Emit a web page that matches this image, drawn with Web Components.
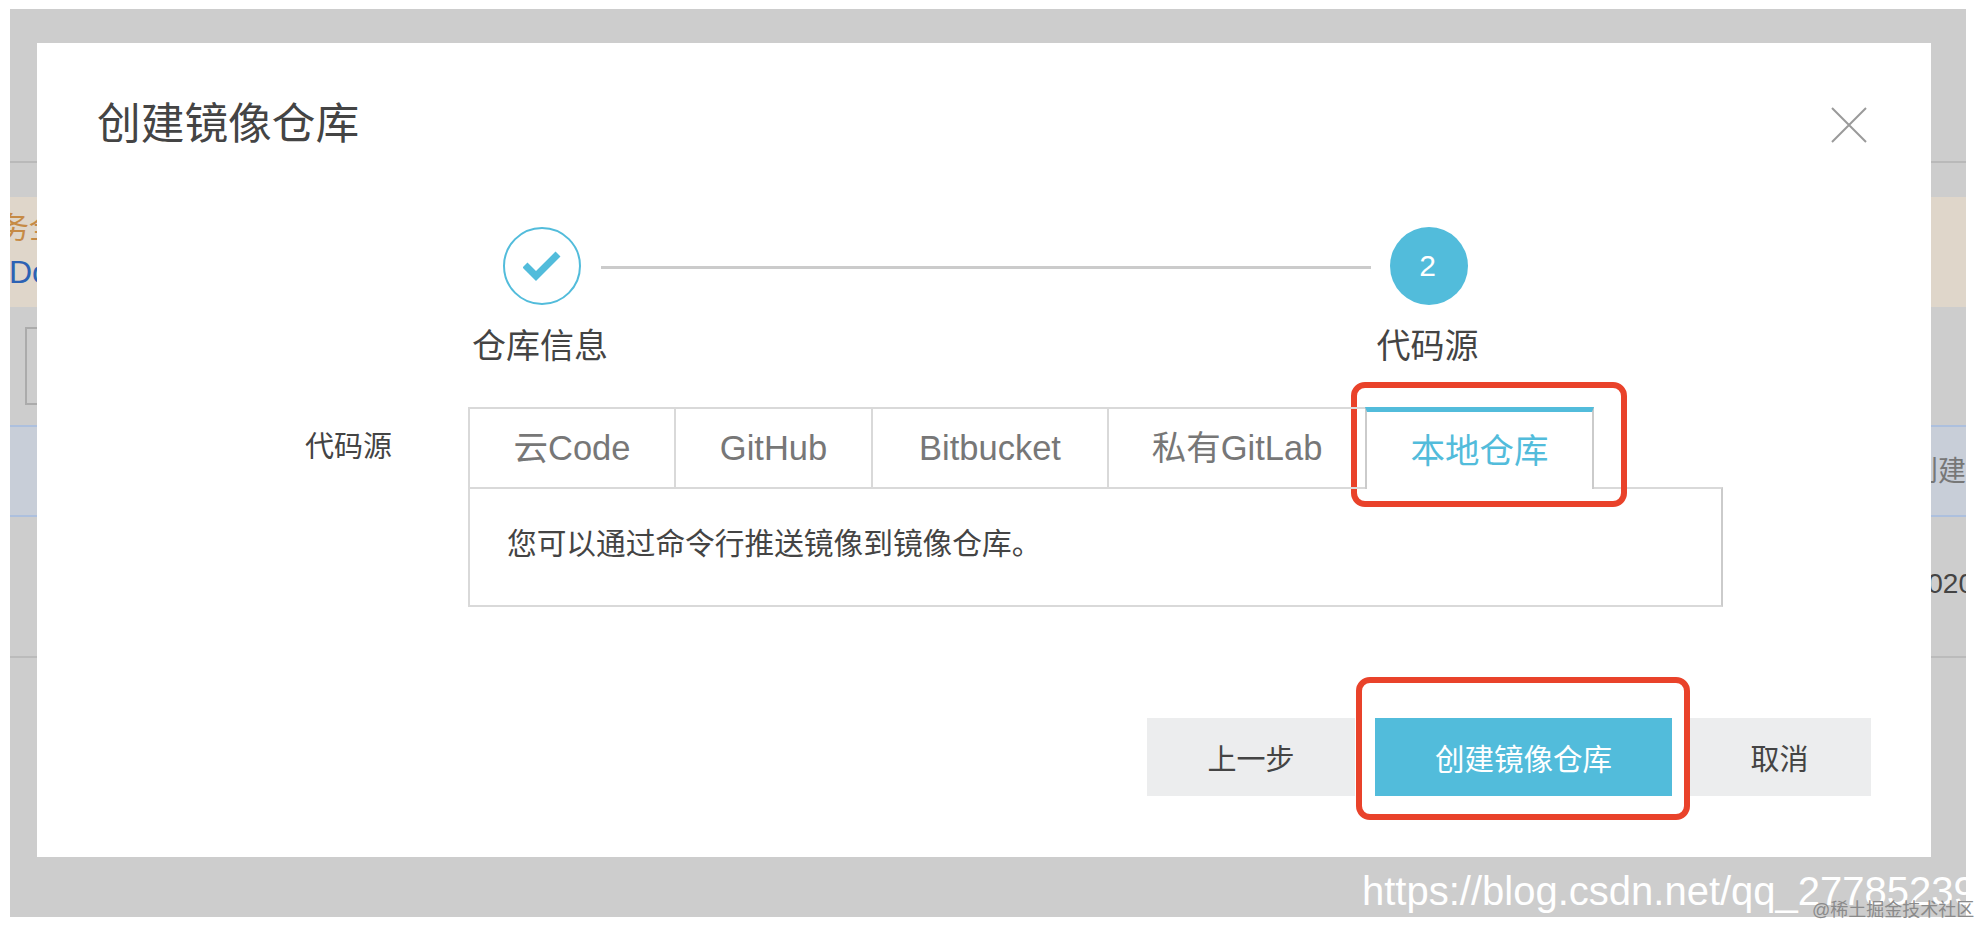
<!DOCTYPE html>
<html lang="zh">
<head>
<meta charset="utf-8">
<title>创建镜像仓库</title>
<style>
  html, body { margin: 0; height: 926px; overflow: hidden; background: #fff; }
  body { font-family: "Liberation Sans", "Noto Sans CJK SC", sans-serif; color: #444; }
</style>
</head>
<body>
<repo-screen>
  <repo-dialog title-text="创建镜像仓库">
    <repo-steps slot="steps">
      <repo-step state="done" label="仓库信息"></repo-step>
      <repo-step num="2" label="代码源"></repo-step>
    </repo-steps>
    <repo-tabs slot="form" label="代码源">
      <repo-tab style="width:206px">云Code</repo-tab>
      <repo-tab style="width:197px">GitHub</repo-tab>
      <repo-tab style="width:236px">Bitbucket</repo-tab>
      <repo-tab style="width:258px">私有GitLab</repo-tab>
      <repo-tab style="width:229px" active>本地仓库</repo-tab>
      <span slot="panel">您可以通过命令行推送镜像到镜像仓库。</span>
    </repo-tabs>
    <repo-button slot="actions" style="width:208px">上一步</repo-button>
    <repo-button slot="actions" style="width:297px" primary>创建镜像仓库</repo-button>
    <repo-button slot="actions" style="width:183px">取消</repo-button>
  </repo-dialog>
</repo-screen>

<script>
// page behind the modal, only its edges show
const screenTemplate = document.createElement("template");
screenTemplate.innerHTML = `
  <style>
    :host { display: block; position: relative; height: 926px; padding: 9px 12px 9px 10px; box-sizing: border-box; }
    .frame { position: relative; height: 908px; background: #cdcdcd; overflow: hidden; }
    .head { height: 154px; border-bottom: 2px solid #b9b9b9; box-sizing: border-box; }
    .notice { margin-top: 34px; height: 110px; background: #dfd6ca; padding-top: 9px; box-sizing: border-box; }
    .notice div { font-size: 30px; line-height: 44px; margin-left: -11px; white-space: nowrap; }
    .warn { color: #c68a45; }
    .doc { color: #2c62b4; margin-left: -1px !important; font-size: 32px !important; }
    .tools { margin: 20px 0 0 15px; height: 78px; width: 60px; border: 2px solid #ababab; box-sizing: border-box; }
    .thead { margin-top: 20px; height: 92px; background: #c8ced8; border-top: 2px solid #adc0de; border-bottom: 2px solid #adc0de; box-sizing: border-box;
      display: flex; justify-content: flex-end; align-items: center; overflow: hidden; font-size: 28px; color: #777; padding-bottom: 4px; }
    .thead span { margin-right: 0; }
    .row { height: 141px; border-bottom: 2px solid #bbb; box-sizing: border-box; display: flex; justify-content: flex-end; padding-top: 49px; font-size: 28px; line-height: 36px; color: #444; }
    .row span { margin-right: -8px; }
    .mark { position: absolute; left: 1362px; top: 866px; font-size: 40px; line-height: 50px; color: #fff; white-space: nowrap; }
    .juejin { position: absolute; left: 1812px; top: 899px; font-size: 18px; line-height: 22px; color: #8a8a8a; white-space: nowrap; }
  </style>
  <div class="frame">
    <div class="head"></div>
    <div class="notice">
      <div class="warn">务全</div>
      <div class="doc">Do</div>
    </div>
    <div class="tools"></div>
    <div class="thead"><span>创建</span></div>
    <div class="row"><span>2020</span></div>
  </div>
  <slot></slot>
  <div class="mark">https://blog.csdn.net/qq_27785239</div>
  <div class="juejin">@稀土掘金技术社区</div>
`;

class RepoScreen extends HTMLElement {
  constructor() {
    super();
    this.attachShadow({ mode: "open" });
    this.shadowRoot.appendChild(screenTemplate.content.cloneNode(true));
  }
}

const dialogTemplate = document.createElement("template");
dialogTemplate.innerHTML = `
  <style>
    :host { display: block; position: absolute; left: 37px; top: 43px; width: 1894px; height: 814px; background: #fff; }
    .head { display: flex; justify-content: space-between; padding: 56px 64px 0 60px; height: 128px; box-sizing: border-box; }
    h1 { margin: 0; font-size: 43.7px; line-height: 50px; font-weight: 400; color: #444; }
    svg { display: block; margin-top: 8px; }
    .steps { margin: 56px 0 0 435px; width: 1027px; }
    .form { margin-top: 40px; }
    .actions { display: flex; gap: 20px; margin: 111px 0 0 1110px; }
    .actions ::slotted(:last-child) { margin-left: -4px; }
    .note { position: absolute; box-sizing: border-box; border: 6px solid #e9422a; border-radius: 14px; }
    .note.tab { left: 1314px; top: 339px; width: 276px; height: 125px; }
    .note.btn { left: 1319px; top: 634px; width: 334px; height: 143px; }
  </style>
  <div class="head">
    <h1></h1>
    <svg width="36" height="36" viewBox="0 0 36 36" fill="none" stroke="#9a9a9a" stroke-width="2"><path d="M1 1 35 35M35 1 1 35"/></svg>
  </div>
  <div class="steps"><slot name="steps"></slot></div>
  <div class="form"><slot name="form"></slot></div>
  <div class="actions"><slot name="actions"></slot></div>
  <div class="note tab"></div>
  <div class="note btn"></div>
`;

class RepoDialog extends HTMLElement {
  constructor() {
    super();
    this.attachShadow({ mode: "open" });
    this.shadowRoot.appendChild(dialogTemplate.content.cloneNode(true));
    this.shadowRoot.querySelector("h1").innerText = this.getAttribute("title-text");
  }
}

const stepsTemplate = document.createElement("template");
stepsTemplate.innerHTML = `
  <style>
    :host { display: flex; }
    .line { flex: 1; height: 3px; background: #cbcbcb; margin: 39px -12px 0 -11px; }
    ::slotted(*) { flex: none; }
  </style>
  <slot name="a"></slot><div class="line"></div><slot name="b"></slot>
`;

class RepoSteps extends HTMLElement {
  constructor() {
    super();
    this.attachShadow({ mode: "open" });
    this.shadowRoot.appendChild(stepsTemplate.content.cloneNode(true));
    // first step goes left of the line, second goes right
    this.children[0].slot = "a";
    this.children[1].slot = "b";
  }
}

const stepTemplate = document.createElement("template");
stepTemplate.innerHTML = `
  <style>
    :host { display: flex; flex-direction: column; align-items: center; width: 140px; }
    .dot { width: 78px; height: 78px; border-radius: 50%; box-sizing: border-box; display: flex; align-items: center; justify-content: center;
      background: #52bcdb; color: #fff; font-size: 30px; padding-right: 3px; }
    :host([state="done"]) .dot { background: #fff; border: 2.5px solid #52bcdb; padding: 0; }
    .label { margin: 20px 3px 0 0; font-size: 34px; line-height: 42px; color: #444; white-space: nowrap; }
    :host([state="done"]) .label { margin-right: 4px; }
  </style>
  <div class="dot"></div>
  <div class="label"></div>
`;

class RepoStep extends HTMLElement {
  constructor() {
    super();
    this.attachShadow({ mode: "open" });
    this.shadowRoot.appendChild(stepTemplate.content.cloneNode(true));
    this.shadowRoot.querySelector(".label").innerText = this.getAttribute("label");
    const dot = this.shadowRoot.querySelector(".dot");
    if (this.getAttribute("state") === "done") {
      dot.innerHTML = `<svg width="38" height="30" viewBox="0 0 38 30" fill="none" stroke="#52bcdb" stroke-width="7"><path d="M2 14 13 25 35 3"/></svg>`;
    } else {
      dot.innerText = this.getAttribute("num");
    }
  }
}

const tabsTemplate = document.createElement("template");
tabsTemplate.innerHTML = `
  <style>
    :host { display: flex; }
    .label { width: 162px; margin: 3px 1px 0 268px; padding-top: 15px; font-size: 29px; line-height: 44px; color: #444; flex: none; }
    .box { width: 1255px; }
    .strip { display: flex; height: 81px; position: relative; z-index: 1; }
    .panel { height: 120px; border: 2px solid #d9d9d9; border-right-color: #cbcbcb; box-sizing: border-box; margin-top: -1px;
      padding: 34px 0 0 37px; font-size: 29.7px; line-height: 42px; color: #444; }
  </style>
  <div class="label"></div>
  <div class="box">
    <div class="strip"><slot></slot></div>
    <div class="panel"><slot name="panel"></slot></div>
  </div>
`;

class RepoTabs extends HTMLElement {
  constructor() {
    super();
    this.attachShadow({ mode: "open" });
    this.shadowRoot.appendChild(tabsTemplate.content.cloneNode(true));
    this.shadowRoot.querySelector(".label").innerText = this.getAttribute("label");
  }
}

const tabTemplate = document.createElement("template");
tabTemplate.innerHTML = `
  <style>
    :host { display: flex; align-items: center; justify-content: center; box-sizing: border-box; height: 82px; line-height: 44px;
      border: 2px solid #d9d9d9; border-right: 0; border-bottom: 2px solid #d9d9d9; font-size: 34.5px; color: #777; white-space: nowrap; flex: none; }
    :host([active]) { border: 2px solid #cbcbcb; border-top: 5px solid #52bcdb; border-bottom: 0; background: #fff; color: #52bcdb; }
  </style>
  <slot></slot>
`;

class RepoTab extends HTMLElement {
  constructor() {
    super();
    this.attachShadow({ mode: "open" });
    this.shadowRoot.appendChild(tabTemplate.content.cloneNode(true));
  }
}

const buttonTemplate = document.createElement("template");
buttonTemplate.innerHTML = `
  <style>
    :host { display: flex; align-items: center; justify-content: center; height: 78px; background: #ecedee; color: #444; font-size: 29px; flex: none; }
    :host([primary]) { background: #52bcdb; color: #fff; font-size: 29.5px; }
  </style>
  <slot></slot>
`;

class RepoButton extends HTMLElement {
  constructor() {
    super();
    this.attachShadow({ mode: "open" });
    this.shadowRoot.appendChild(buttonTemplate.content.cloneNode(true));
  }
}

window.customElements.define("repo-screen", RepoScreen);
window.customElements.define("repo-dialog", RepoDialog);
window.customElements.define("repo-steps", RepoSteps);
window.customElements.define("repo-step", RepoStep);
window.customElements.define("repo-tabs", RepoTabs);
window.customElements.define("repo-tab", RepoTab);
window.customElements.define("repo-button", RepoButton);
</script>
</body>
</html>
